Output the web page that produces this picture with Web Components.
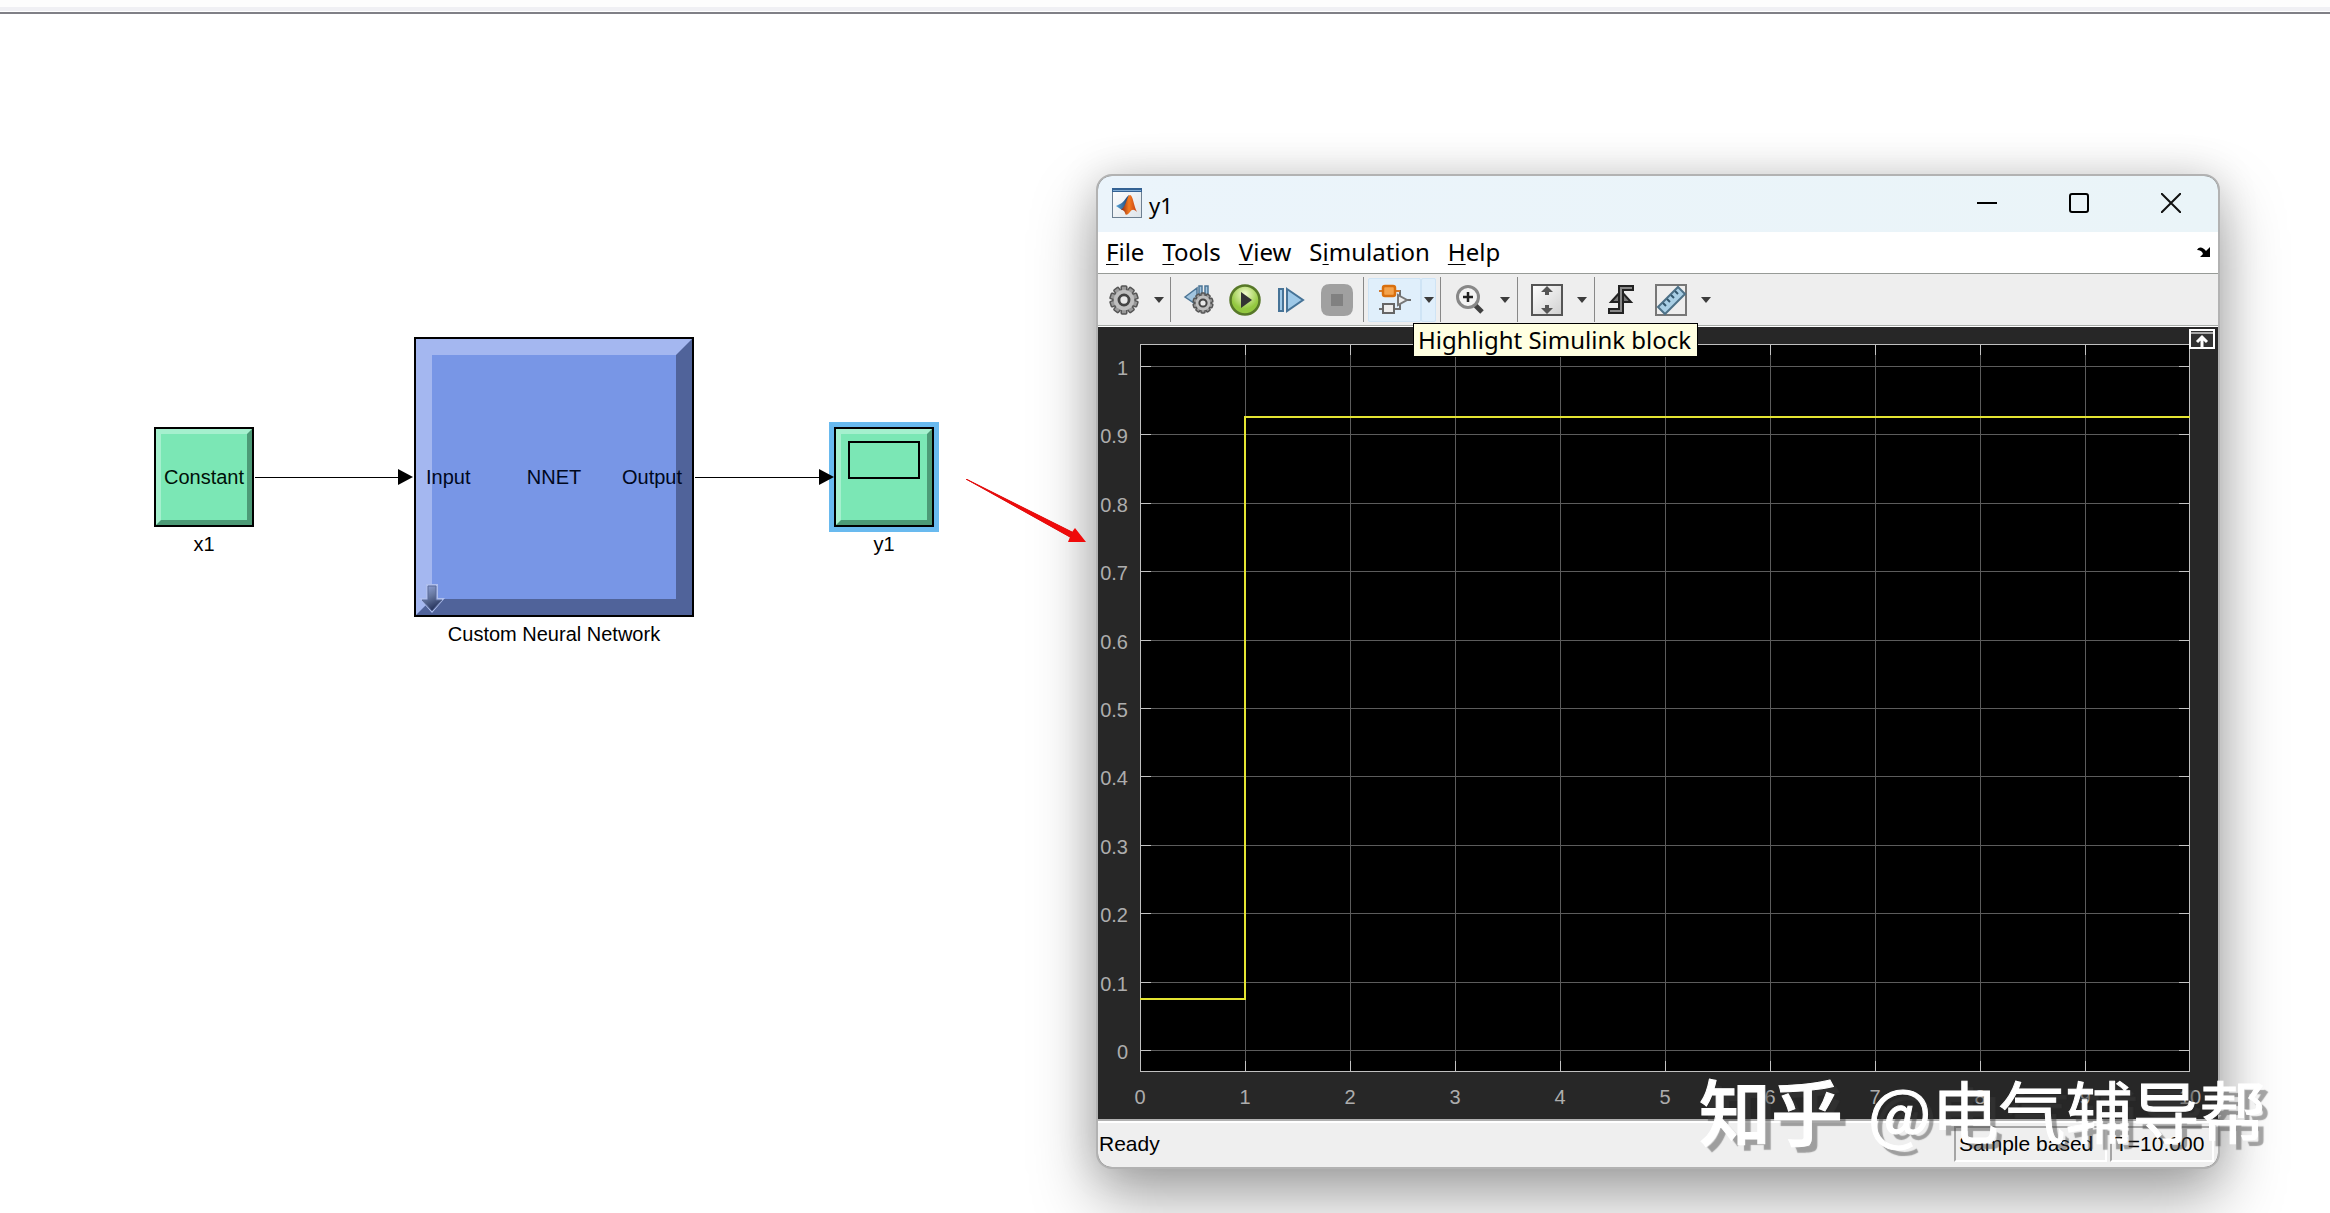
<!DOCTYPE html>
<html lang="en">
<head>
<meta charset="utf-8">
<title>Custom Neural Network – scope y1</title>
<style>
  html, body { margin: 0; min-height: 100%; background: #fff; overflow: hidden; }
  body { font: 20px/24px "Liberation Sans", Arial, sans-serif; color: #000; }
</style>
</head>
<body>
<model-canvas>
  <sim-block kind="constant" name="x1" style="--x:154px;--y:427px;--size:100px;--bevel:5px">
    <span>Constant</span>
  </sim-block>
  <sim-block kind="subsystem" name="Custom Neural Network" style="--x:414px;--y:337px;--size:280px;--bevel:16px">
    <span>Input</span><span>NNET</span><span>Output</span>
  </sim-block>
  <sim-block kind="scope" name="y1" style="--x:834px;--y:427px;--size:100px;--bevel:5px"></sim-block>
  <sim-wire style="--x:255px;--length:158px"></sim-wire>
  <sim-wire style="--x:695px;--length:139px"></sim-wire>
  <scope-window></scope-window>
  <callout-arrow></callout-arrow>
  <water-mark><b>知乎</b><span>@电气辅导帮</span></water-mark>
</model-canvas>

<script>
const define = (name, html) => customElements.define(name, class extends HTMLElement {
  connectedCallback() {
    if (this.shadowRoot) return;
    const root = this.attachShadow({ mode: 'open' });
    const t = document.createElement('template');
    t.innerHTML = typeof html === 'function' ? html(this) : html;
    root.append(t.content.cloneNode(true));
  }
});

define('sim-block', el => {
  const kind = el.getAttribute('kind');
  return `<style>
  :host { position: absolute; left: var(--x); top: var(--y); width: var(--size); display: flex; flex-direction: column; align-items: center; gap: 5px; line-height: 24px; }
  .box { box-sizing: border-box; width: var(--size); height: var(--size); border: 2px solid #000; position: relative; background: #7be7b5; }
  .bevel { position: absolute; inset: 0; border: var(--bevel) solid; border-color: #a5f0ce #4c9a76 #4c9a76 #a5f0ce; }
  :host([kind=subsystem]) .box { background: #7896e6; }
  :host([kind=subsystem]) .bevel { border-color: #a4b7f0 #50639a #50639a #a4b7f0; }
  :host([kind=scope]) .box { box-shadow: 0 0 0 5px #69baef; }
  .face { position: absolute; inset: 0; display: flex; align-items: center; justify-content: center; color: #001008; }
  :host([kind=subsystem]) .face { display: grid; grid-template-columns: 1fr auto 1fr; padding: 0 10px; color: #000820; }
  :host([kind=subsystem]) ::slotted(:last-child) { justify-self: end; }
  .screen { position: absolute; left: 12px; top: 12px; width: 68px; height: 34px; border: 2px solid #000; }
  .link { position: absolute; left: 2px; bottom: 0; }
  .name { white-space: nowrap; }
  </style>
  <div class="box"><div class="bevel"></div>
  ${kind === 'scope' ? '<div class="screen"></div>' : '<div class="face"><slot></slot></div>'}
  ${kind === 'subsystem' ? `<svg class="link" width="28" height="33" viewBox="0 0 28 33"><defs><linearGradient id="g" x1="0" y1="0" x2=".4" y2="1"><stop stop-color="#94a6dc"/><stop offset=".5" stop-color="#66779f"/><stop offset="1" stop-color="#26335c"/></linearGradient></defs><path d="M8 2H20V16H27L14 31L1 16H8Z" fill="#afbfee"/><path d="M10 4H18V18H24L14 29L4 18H10Z" fill="url(#g)" stroke="#5a6a98"/></svg>` : ''}
  </div><div class="name">${el.getAttribute('name')}</div>`;
});

define('sim-wire', `<style>
  :host { position: absolute; left: var(--x); top: 469px; width: var(--length); height: 16px; display: flex; align-items: flex-start; }
  i { flex: 1; height: 1px; margin-top: 8px; background: #000; }
  svg { display: block; }
  </style><i></i><svg width="15" height="16"><path d="M0 0L15 8L0 16Z"/></svg>`);

define('callout-arrow', `<style>
  :host { position: absolute; left: 966px; top: 479px; display: block; }
  svg { display: block; }
  </style><svg width="122" height="66"><path d="M0 0L106 53L109 49L120 63H102L104 58Z" fill="#f00a0a"/><path d="M0 0L106 53L104 58Z" fill="#f00a0a" stroke="#e01010"/></svg>`);

define('water-mark', `<style>
  :host { position: absolute; left: 1699px; top: 1061px; display: flex; align-items: center; gap: 25px; height: 96px; font: 67px/96px "Noto Sans CJK SC", sans-serif; color: #fff; -webkit-text-stroke: 1px #fff; white-space: nowrap; text-shadow: 6px 6px 1px rgba(60,60,60,.45); pointer-events: none; }
  ::slotted(b) { font-size: 72px; font-weight: 500; }
  </style><slot></slot>`);

define('model-canvas', `<style>
  :host { display: block; position: relative; height: 100vh; }
  .edge { height: 4px; border-top: 7px solid #fdfdfd; background: #f0f0f4; border-bottom: 1px solid #fff; }
  .rule { height: 2px; background: #808086; }
  </style><div class="edge"></div><div class="rule"></div><slot></slot>`);

define('scope-title', `<style>
  :host { box-sizing: border-box; display: flex; align-items: center; height: 56px; padding: 0 1px 2px 14px; background: linear-gradient(90deg, #ebf4fb, #eaf4f8); font: 22px/30px "Noto Sans", "Segoe UI", sans-serif; }
  .logo { margin-right: 7px; }
  span { flex: 1; padding-top: 4px; }
  button { all: unset; width: 92px; height: 54px; display: grid; place-items: center; }
  svg { display: block; }
  </style>
  <svg class="logo" width="30" height="30" viewBox="0 0 30 30"><defs>
    <linearGradient id="a" y2="1"><stop stop-color="#fff"/><stop offset="1" stop-color="#dde4ea"/></linearGradient>
    <linearGradient id="o"><stop stop-color="#8a2410"/><stop offset=".5" stop-color="#f47b20"/><stop offset="1" stop-color="#c43c10"/></linearGradient>
    <linearGradient id="b"><stop stop-color="#58a5d8"/><stop offset="1" stop-color="#1d3f72"/></linearGradient></defs>
    <rect x=".5" y=".5" width="29" height="29" fill="url(#a)" stroke="#6d7f91"/><path d="M0 0H30V4H0Z" fill="#346294"/><path d="M1 2H29V3H1Z" fill="#83add4"/>
    <path d="M4 18L9 15.500C12 14 14 9 17 7L15 18L10 22Z" fill="url(#b)"/><path d="M9 21.500C14 20 15 7 18 7C21 7 22 19 25 24C22 21 20 21 18 24C16.500 26 15 27 13.500 26.500C13 24 12 22 9 21.500Z" fill="url(#o)"/></svg>
  <span>y1</span>
  <button aria-label="Minimize"><svg width="20" height="20"><path d="M0 10H20" stroke="#000" stroke-width="2"/></svg></button>
  <button aria-label="Maximize"><svg width="20" height="20"><rect x="1" y="1" width="18" height="18" rx="2" fill="none" stroke="#000" stroke-width="2"/></svg></button>
  <button aria-label="Close"><svg width="20" height="20"><path d="M0 0L20 20M20 0L0 20" stroke="#111" stroke-width="2"/></svg></button>`);

define('scope-menu', `<style>
  :host { box-sizing: border-box; display: flex; align-items: center; gap: 18px; height: 42px; padding: 0 7px 2px 8px; background: #fff; border-bottom: 1px solid #979b97; font: 24px/34px "Noto Sans", "Segoe UI", sans-serif; }
  button { all: unset; }
  u { text-underline-offset: 3px; text-decoration-thickness: 1px; }
  .dock { margin-left: auto; }
  svg { display: block; }
  </style>
  <button><u>F</u>ile</button><button><u>T</u>ools</button><button><u>V</u>iew</button><button>S<u>i</u>mulation</button><button><u>H</u>elp</button>
  <button class="dock" aria-label="Dock"><svg width="15" height="12"><path d="M1 4C3 0 7 1 10 5L14 1V11H4L7 8C6 5 4 4 1 4Z"/></svg></button>`);

define('tool-button', el => `<style>
  :host { display: flex; height: 44px; align-items: center; }
  button { all: unset; box-sizing: border-box; width: 46px; height: 44px; display: grid; place-items: center; }
  .drop { width: 24px; }
  :host([hot]) { background: #e0effb; }
  :host([hot]) button { border: 1px solid #cfe4f5; border-radius: 2px; width: 53px; }
  :host([hot]) .drop { width: 15px; }
  svg, ::slotted(svg) { display: block; }
  </style><button aria-label="${el.getAttribute('label')}"><slot></slot></button>
  ${el.hasAttribute('drop') ? `<button class="drop" aria-label="${el.getAttribute('label')} options"><svg width="10" height="6"><path d="M0 0H10L5 6Z" fill="#3c3c3c"/></svg></button>` : ''}`);

const gear = (cx, cy, r) => {
  const teeth = Array.from({ length: 10 }, (_, i) => `<rect x="${-r * .2}" y="${-r}" width="${r * .4}" height="${r * .5}" rx="1" transform="rotate(${i * 36})"/>`).join('');
  return `<g transform="translate(${cx} ${cy})"><g fill="#999" stroke="#555" stroke-width="1.5">${teeth}</g><circle r="${r * .74}" fill="#bebebe"/><circle r="${r * .36}" fill="#e8e8e8" stroke="#444" stroke-width="${r * .2}"/></g>`;
};

define('scope-toolbar', `<style>
  :host { box-sizing: border-box; position: relative; display: flex; align-items: center; height: 52px; background: #eeeeee; border-bottom: 1px solid #a8aca8; }
  i { width: 1px; height: 45px; background: #888; }
  .tip { position: absolute; z-index: 2; left: 315px; top: 49px; box-sizing: border-box; height: 34px; padding: 0 6px 0 4px; border: 1px solid #000; background: #ffffe1; font: 24px/31px "Noto Sans", "Segoe UI", sans-serif; white-space: nowrap; }
  svg { display: block; }
  div { display: flex; box-sizing: border-box; }
  .g1 { padding-left: 3px; width: 72px; }
  .g2 { width: 192px; padding-left: 5px; }
  .g3 { width: 76px; padding-left: 4px; }
  .g4 { width: 76px; padding-left: 6px; }
  .g5 { padding-left: 3px; gap: 4px; }
  </style>
  <div class="g1"><tool-button label="Configuration" drop><svg width="30" height="30">${gear(15, 15, 14)}</svg></tool-button></div><i></i>
  <div class="g2">
  <tool-button label="Step back options"><svg width="32" height="30"><path d="M2 12L14 3V20ZM16 1H19V18H16ZM22 1H25V12H22Z" fill="#a2c5df" stroke="#4c7596" stroke-width="1.5"/>${gear(20, 18, 10)}</svg></tool-button>
  <tool-button label="Run"><svg width="32" height="32"><defs><radialGradient id="r" cy=".3"><stop stop-color="#f4fcd0"/><stop offset="1" stop-color="#93c840"/></radialGradient></defs><circle cx="16" cy="16" r="14.500" fill="url(#r)" stroke="#577828" stroke-width="2.500"/><path d="M12 8L23 16L12 24Z" fill="#333"/></svg></tool-button>
  <tool-button label="Step forward"><svg width="28" height="26"><path d="M2 2H6V24H2ZM10 2L26 13L10 24Z" fill="#9ec9e8" stroke="#467397" stroke-width="2"/></svg></tool-button>
  <tool-button label="Stop"><svg width="32" height="32"><path d="M9 0H23Q32 0 32 9V23Q32 32 23 32H9Q0 32 0 23V9Q0 0 9 0Z" fill="#a0a0a0"/><rect x="10" y="10" width="12" height="12" fill="#818181"/></svg></tool-button>
  </div><i></i>
  <div class="g3"><tool-button label="Highlight Simulink block" drop hot><svg width="34" height="32"><path d="M1 7H22V12M1 25H22V19M28 16H33" fill="none" stroke="#6f6f6f" stroke-width="2"/><path d="M1 7H22" stroke="#d07a30" stroke-width="2"/><rect x="5" y="2" width="12" height="10" rx="2" fill="#f4a34c" stroke="#d9700f" stroke-width="2.500"/><rect x="5" y="20" width="11" height="9" fill="#eee" stroke="#666" stroke-width="2"/><path d="M20 11L29 16L20 21Z" fill="#eee" stroke="#777" stroke-width="2"/></svg></tool-button></div><i></i>
  <div class="g4"><tool-button label="Zoom" drop><svg width="30" height="30"><path d="M20 20L27 27" stroke="#404040" stroke-width="5"/><circle cx="13" cy="12" r="10.500" fill="#f4f4f4" stroke="#888" stroke-width="3"/><path d="M8 12H18M13 7V17" stroke="#222" stroke-width="2.500"/></svg></tool-button></div><i></i>
  <div class="g4"><tool-button label="Scale axes" drop><svg width="32" height="32"><defs><linearGradient id="s" y2="1"><stop stop-color="#fff"/><stop offset="1" stop-color="#d0d0d0"/></linearGradient></defs><rect x="1" y="1" width="30" height="30" fill="url(#s)" stroke="#555" stroke-width="2"/><path d="M16 2L22 8H18V11H14V8H10ZM16 30L22 24H18V21H14V24H10Z" fill="#555"/></svg></tool-button></div><i></i>
  <div class="g5"><tool-button label="Triggers"><svg width="28" height="32"><path d="M4 18L14 7L24 18Z" fill="#777" stroke="#222" stroke-width="2"/><path d="M1 27H14V4H27" fill="none" stroke="#222" stroke-width="6"/><path d="M3 27H14V4H25" fill="none" stroke="#888" stroke-width="2"/></svg></tool-button>
  <tool-button label="Measurements" drop><svg width="32" height="32"><rect x="1" y="1" width="30" height="30" fill="#eee" stroke="#777" stroke-width="2"/><path d="M3 23L23 3L30 10L10 30Z" fill="#a9cfe5" stroke="#4d7187" stroke-width="2"/><path d="M8 19L11 22M12 15L15 18M16 11L19 14M20 7L23 10" stroke="#34586e" stroke-width="2"/></svg></tool-button></div>
  <div class="tip" role="tooltip">Highlight Simulink block</div>`);

define('scope-plot', () => {
  const W = 1050, H = 728, x0 = 105, top = 23, step = 68.4;
  let grid = '', ticks = '';
  for (let i = 1; i < 10; i++) {
    const x = i * x0 + .5;
    grid += `M${x} 0V${H}`;
    ticks += `M${x} 0V11M${x} ${H}V${H - 11}`;
  }
  for (let i = 0; i <= 10; i++) {
    const y = Math.round(top + i * step) - .5;
    grid += `M0 ${y}H${W}`;
    ticks += `M0 ${y}H11M${W} ${y}H${W - 11}`;
  }
  const ys = Array.from({ length: 11 }, (_, i) => `<span>${i === 0 ? 1 : i === 10 ? 0 : (1 - i / 10).toFixed(1)}</span>`).join('');
  const xs = Array.from({ length: 11 }, (_, i) => `<span>${i}</span>`).join('');
  return `<style>
  :host { position: relative; flex: 1; display: grid; grid-template: 1fr 47px / 42px 1fr; padding: 17px 28px 0 0; background: #272727; border-top: 1px solid #fff; color: #adadad; font: 20px/24px "Liberation Sans", Arial, sans-serif; min-height: 0; box-sizing: border-box; }
  svg { display: block; width: 100%; height: 100%; }
  .y { display: flex; flex-direction: column; justify-content: space-between; align-items: flex-end; padding: 12px 12px 8px 0; min-height: 0; }
  .x { grid-column: 2; display: flex; justify-content: space-between; padding-top: 13px; margin: 0 -15px; }
  .x span { width: 30px; text-align: center; }
  .plot { min-height: 0; background: #000; box-sizing: border-box; }
  button { all: unset; position: absolute; right: 3px; top: 2px; width: 26px; height: 20px; }
  </style>
  <div class="y">${ys}</div>
  <svg class="plot" viewBox="0 0 ${W} ${H}" preserveAspectRatio="none" fill="none">
  <path d="${grid}" stroke="#5c5c5c"/><path d="${ticks}" stroke="#c4c4c4"/><rect x=".5" y=".5" width="${W - 1}" height="${H - 1}" stroke="#c0c0c0"/>
  <path d="M0 655H105V73H${W}" stroke="#e4e432" stroke-width="2"/></svg>
  <div class="x">${xs}</div>
  <button aria-label="Maximize axes"><svg viewBox="0 0 26 20"><rect x="1" y="1" width="24" height="18" fill="#333" stroke="#fff" stroke-width="2"/><path d="M2 4H24" stroke="#aaa" stroke-width="2"/><path d="M13 19V9M8 13L13 8L18 13" stroke="#fff" stroke-width="3" fill="none"/></svg></button>`;
});

define('scope-status', `<style>
  :host { box-sizing: border-box; display: flex; align-items: center; height: 48px; padding-right: 4px; background: #efefef; border-top: 2px solid #b0b0b0; box-shadow: inset 0 2px #fff; font: 21px/24px "Liberation Sans", Arial, sans-serif; }
  span { padding-left: 1px; flex: 1; }
  div { box-sizing: border-box; height: 36px; line-height: 32px; padding: 0 3px; border: 2px solid; border-color: #a5a5a5 #fff #fff #a5a5a5; white-space: nowrap; }
  .mode { width: 153px; } .time { width: 104px; margin-left: 3px; }
  </style><span>Ready</span><div class="mode">Sample based</div><div class="time">T=10.000</div>`);

define('scope-window', `<style>
  :host { position: absolute; left: 1096px; top: 174px; right: 110px; bottom: 44px; box-sizing: border-box; border: 2px solid #b2b2b2; border-radius: 16px; background: #272727; box-shadow: 0 30px 64px rgba(0,0,0,.34), 0 0 40px rgba(0,0,0,.14); }
  .body { display: flex; flex-direction: column; height: 100%; border-radius: 14px; overflow: hidden; }
  </style><div class="body"><scope-title></scope-title><scope-menu></scope-menu><scope-toolbar></scope-toolbar><scope-plot></scope-plot><scope-status></scope-status></div>`);
</script>
</body>
</html>
